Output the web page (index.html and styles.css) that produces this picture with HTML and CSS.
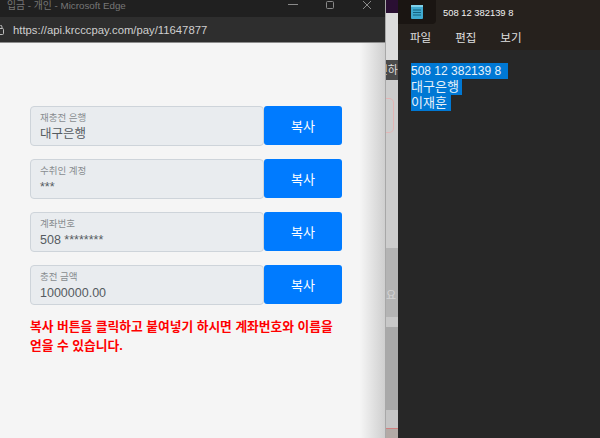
FILE: index.html
```html
<!DOCTYPE html>
<html lang="ko">
<head>
    <meta charset="UTF-8">
    <meta name="viewport" content="width=device-width, initial-scale=1.0">
    <title>입금 - 개인</title>
    <link rel="stylesheet" href="styles.css">
</head>
<body>
    <div class="edge">
        <div class="title-bar">
            <span class="title-text">입금 - 개인 - Microsoft Edge</span>
            <div class="window-controls">
                <svg width="10" height="10" viewBox="0 0 10 10"><path d="M0 4.5h10" stroke="#8a8a8a" fill="none"/></svg>
                <svg width="10" height="10" viewBox="0 0 10 10"><rect x="1.5" y="1.5" width="7" height="7" rx="1" stroke="#8a8a8a" fill="none"/></svg>
                <svg width="10" height="10" viewBox="0 0 10 10"><path d="M1 1l8 8M9 1l-8 8" stroke="#8a8a8a" fill="none"/></svg>
            </div>
        </div>
        <div class="address-bar">
            <svg class="lock" width="8" height="10" viewBox="0 0 8 10"><rect x="0.5" y="3.5" width="7" height="6" rx="1" stroke="#bdbdbd" fill="none"/><path d="M2 3.5V2a2 2 0 0 1 4 0v1.5" stroke="#bdbdbd" fill="none"/></svg>
            <span class="url">https://api.krcccpay.com/pay/11647877</span>
        </div>
        <div class="page">
            <div class="form-row">
                <div class="field">
                    <label>재충전 은행</label>
                    <div class="value">대구은행</div>
                </div>
                <button class="copy-btn">복사</button>
            </div>
            <div class="form-row">
                <div class="field">
                    <label>수취인 계정</label>
                    <div class="value">***</div>
                </div>
                <button class="copy-btn">복사</button>
            </div>
            <div class="form-row">
                <div class="field">
                    <label>계좌번호</label>
                    <div class="value">508 ********</div>
                </div>
                <button class="copy-btn">복사</button>
            </div>
            <div class="form-row">
                <div class="field">
                    <label>충전 금액</label>
                    <div class="value">1000000.00</div>
                </div>
                <button class="copy-btn">복사</button>
            </div>
            <p class="notice">복사 버튼을 클릭하고 붙여넣기 하시면 계좌번호와 이름을 얻을 수 있습니다.</p>
        </div>
    </div>

    <!-- window behind, only a sliver shows -->
    <div class="behind">
        <div class="behind-top"></div>
        <div class="behind-light"></div>
        <div class="behind-tag"><span>인하</span></div>
        <div class="behind-card"><div class="behind-pill"></div></div>
        <div class="behind-grey"><span>요</span></div>
        <div class="behind-band"></div>
        <div class="behind-grey2"></div>
        <div class="behind-foot"></div>
    </div>

    <div class="notepad">
        <div class="np-tabs">
            <div class="np-icon-tab">
                <svg width="12" height="14" viewBox="0 0 12 14"><rect width="12" height="14" rx="1" fill="#3fa9cf"/><rect width="12" height="2" fill="#7fd0ea"/><path d="M2 5h8M2 7.5h8M2 10h8" stroke="#12607f"/></svg>
            </div>
            <span class="np-title">508 12 382139 8</span>
        </div>
        <div class="np-menu">
            <span>파일</span>
            <span>편집</span>
            <span>보기</span>
        </div>
        <div class="np-text">
            <span class="np-line">508 12 382139 8  </span>
            <span class="np-line np-ko">대구은행 </span>
            <span class="np-line np-ko">이재훈 </span>
        </div>
    </div>
</body>
</html>
```

FILE: styles.css
```css
body {
    margin: 0;
    width: 600px;
    height: 438px;
    display: flex;
    overflow: hidden;
    font-family: "Liberation Sans", "Noto Sans CJK KR", sans-serif;
    background-color: #272727;
}
.edge {
    width: 385px;
    display: flex;
    flex-direction: column;
}
.title-bar {
    height: 17px;
    background: #202020;
    display: flex;
    justify-content: space-between;
    overflow: hidden;
}
.title-text {
    margin-left: 7px;
    font-size: 9.8px;
    line-height: 11px;
    color: #777;
}
.window-controls {
    display: flex;
    gap: 27px;
    margin-right: 13px;
}
.address-bar {
    height: 25px;
    background: #2e2e2e;
    border-bottom: 1px solid #8d8d8d;
    display: flex;
    align-items: center;
    gap: 9px;
}
.lock {
    margin-left: -4px;
}
.url {
    font-size: 11.3px;
    color: #cfcfcf;
}
.page {
    flex: 1;
    padding: 63px 43px 0 30px;
    background: linear-gradient(to right, #f5f5f5 360px, #cfcfcf 385px);
}
.form-row {
    display: flex;
    align-items: flex-start;
    margin-bottom: 13px;
}
.field {
    flex: 1;
    height: 38px;
    padding: 0 9px;
    background: #e9ecef;
    border: 1px solid #ced4da;
    border-radius: 4px;
}
.field label {
    display: block;
    margin-top: 4px;
    font-size: 9.5px;
    line-height: 14px;
    color: #888c90;
}
.value {
    margin-top: 1px;
    font-size: 12.5px;
    line-height: 16px;
    color: #555b61;
}
.copy-btn {
    width: 78px;
    height: 39px;
    padding: 0;
    background: #007bff;
    color: #fff;
    border: none;
    border-radius: 3px;
    font-family: inherit;
    font-size: 13px;
}
.notice {
    margin: 11px 0 0;
    font-size: 12.75px;
    font-weight: bold;
    line-height: 18.5px;
    color: #f00;
    word-break: keep-all;
}
.behind {
    width: 13px;
    display: flex;
    flex-direction: column;
    overflow: hidden;
    background: #b3aaa6;
    border-left: 1px solid #a8a8a8;
    box-sizing: border-box;
}
.behind-top {
    height: 13px;
    background: #2a0f33;
}
.behind-light {
    height: 47px;
    background: #dcdcdc;
}
.behind-tag {
    height: 20px;
    background: #4a4a4a;
    color: #ddd;
    font-size: 11px;
    line-height: 20px;
    white-space: nowrap;
    direction: rtl;
}
.behind-card {
    height: 168px;
    background: #cdcdcd;
    padding-top: 18px;
    box-sizing: border-box;
}
.behind-pill {
    width: 7px;
    height: 33px;
    border: 1px solid #e3b5b5;
    border-left: none;
    border-radius: 0 5px 5px 0;
}
.behind-grey {
    height: 69px;
    background: #b4b4b4;
    color: #d5d5d5;
    font-size: 11px;
    padding-top: 38px;
    box-sizing: border-box;
}
.behind-band {
    height: 10px;
    background: #c8c8c8;
}
.behind-grey2 {
    height: 83px;
    background: #a9a9a9;
}
.behind-foot {
    height: 18px;
    background: #c5c5c5;
    border-bottom: 1px solid #d08080;
}
.notepad {
    width: 202px;
    display: flex;
    flex-direction: column;
    background: #272727;
}
.np-tabs {
    height: 24px;
    background: #26211d;
    display: flex;
    align-items: center;
    gap: 7px;
}
.np-icon-tab {
    width: 38px;
    height: 24px;
    background: #1a1512;
    border-radius: 0 0 4px 0;
    display: flex;
    align-items: center;
    justify-content: center;
}
.np-title {
    font-size: 9.4px;
    color: #f2f2f2;
}
.np-menu {
    height: 26px;
    background: #26211d;
    display: flex;
    align-items: center;
    gap: 24px;
    padding-left: 12px;
    font-size: 11.5px;
    color: #e0e0e0;
}
.np-text {
    padding: 13px 0 0 13px;
    display: flex;
    flex-direction: column;
    align-items: flex-start;
    font-size: 12px;
    line-height: 16px;
    color: #e6f1fa;
    white-space: pre;
}
.np-line {
    background: #0078d4;
}
.np-ko {
    font-size: 13px;
}
```
